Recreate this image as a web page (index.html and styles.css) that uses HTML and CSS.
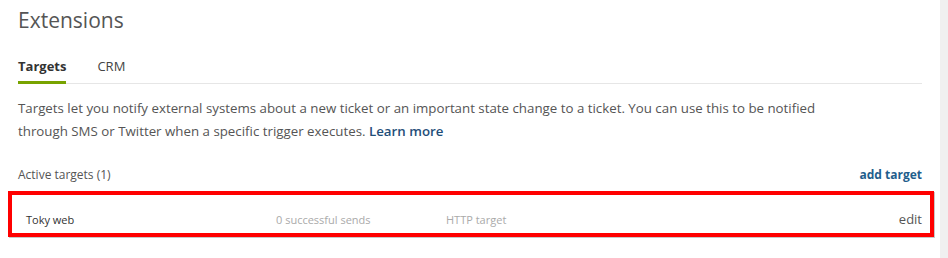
FILE: index.html
```html
<!DOCTYPE html>
<html lang="en">
<head>
<meta charset="utf-8">
<title>Extensions</title>
<link rel="stylesheet" href="styles.css">
</head>
<body>
<div class="page">
  <main class="main">
    <h1 class="title">Extensions</h1>
    <nav class="tabs">
      <span class="tab tab-active">Targets</span>
      <span class="tab">CRM</span>
    </nav>
    <p class="intro">Targets let you notify external systems about a new ticket or an important state change to a ticket. You can use this to be notified through SMS or Twitter when a specific trigger executes. <a class="learn" href="#">Learn more</a></p>
    <div class="list-head">
      <span class="list-title">Active targets (1)</span>
      <a class="add" href="#">add target</a>
    </div>
    <div class="row">
      <span class="cell name">Toky web</span>
      <span class="cell sends">0 successful sends</span>
      <span class="cell kind">HTTP target</span>
      <a class="edit" href="#">edit</a>
    </div>
  </main>
  <div class="gutter"></div>
</div>
</body>
</html>
```
FILE: styles.css
```css
* { box-sizing: border-box; }
html, body { margin: 0; padding: 0; background: #fff; }
body {
  font-family: "Open Sans", "Noto Sans", sans-serif;
  color: #555;
  width: 948px;
  height: 258px;
  overflow: hidden;
}
.page { display: flex; height: 258px; }
.main { flex: 1; padding: 0 18px; }
.gutter { width: 8px; background: #f0f0f0; }

.title {
  margin: 0;
  padding-top: 5px;
  font-size: 21px;
  line-height: 30px;
  font-weight: 400;
  color: #555;
}
.tabs {
  display: flex;
  gap: 31px;
  margin-top: 22px;
  border-bottom: 1px solid #e6e6e6;
}
.tab {
  font-size: 13px;
  line-height: 18px;
  padding-bottom: 6px;
  color: #444;
  border-bottom: 3px solid transparent;
  margin-bottom: -1px;
}
.tab-active {
  font-weight: 700;
  color: #333;
  border-bottom-color: #78a300;
}
.intro {
  margin: 13px 0 0;
  font-size: 13.3px;
  line-height: 23px;
  max-width: 840px;
}
.learn { color: #1f4e79; font-weight: 600; text-decoration: none; }
.list-head {
  display: flex;
  justify-content: space-between;
  align-items: center;
  margin-top: 24px;
  font-size: 12px;
  line-height: 16px;
}
.list-title { color: #555; }
.add { color: #1f5e8c; font-weight: 700; text-decoration: none; }
.row {
  display: flex;
  align-items: center;
  margin: 8px -12px 0 -10px;
  height: 46px;
  padding: 10px 8px 0 14px;
  border: 4px solid #f00;
  box-shadow: 1px 1px 0 #c8c8c8;
  font-size: 11px;
}
.cell { flex: none; }
.name { width: 250px; color: #333; }
.sends { width: 170px; color: #aaa; }
.kind { color: #aaa; }
.edit { margin-left: auto; font-size: 13px; color: #555; text-decoration: none; }
```
